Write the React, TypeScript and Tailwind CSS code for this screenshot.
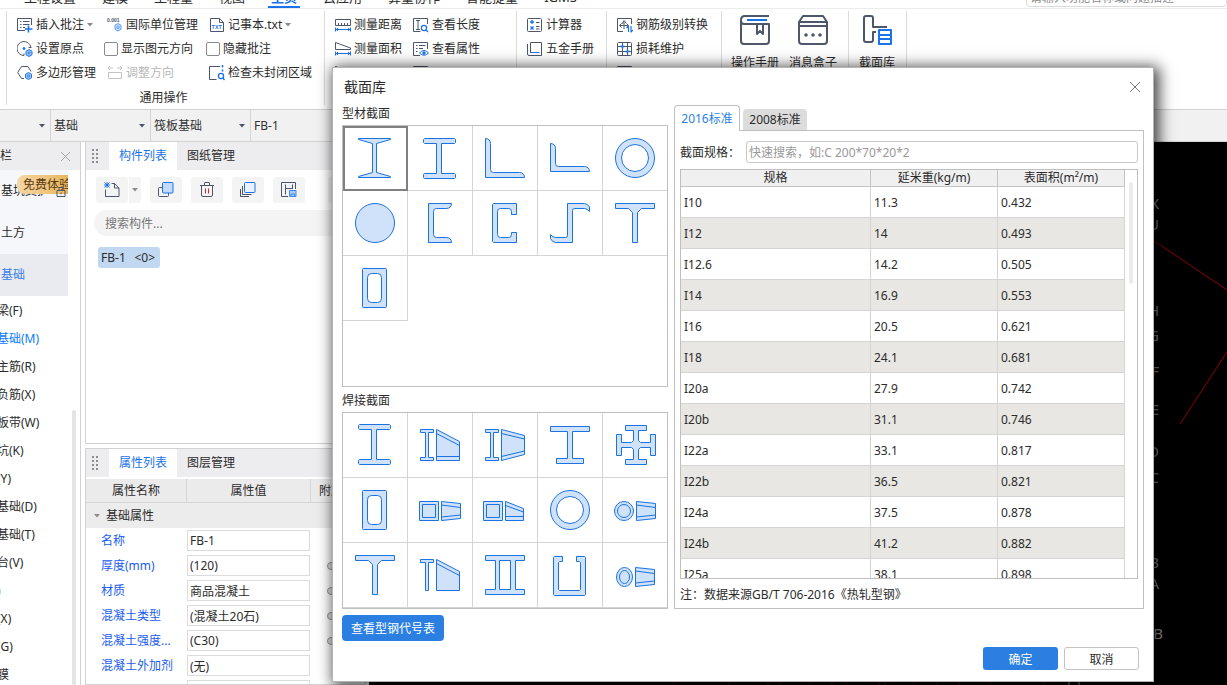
import React from "react";

const INK = "#4d566b";
const BLUE = "#1a73e8";

/* ---------- ribbon icons (16 x 16) ---------- */

function Icon16({ children, className = "" }: { children: React.ReactNode; className?: string }) {
  return (
    <svg viewBox="0 0 16 16" className={`size-4 shrink-0 ${className}`} fill="none" stroke={INK} strokeLinejoin="round" aria-hidden="true">
      {children}
    </svg>
  );
}

const Gear = ({ x, y }: { x: number; y: number }) => (
  <g stroke={BLUE}>
    <path d={`M${x} ${y - 3.5}l3 1.75v3.5l-3 1.75l-3 -1.75v-3.5z`} fill="#9cc6fb" />
    <circle cx={x} cy={y} r="1" fill="#fff" />
  </g>
);

const NoteAddIcon = () => (
  <Icon16>
    <path d="M14.5 8V1.5H.5V13.5H8" />
    <path d="M3 4.5H4.5M6 4.5H12.5M3 7.5H4.5M6 7.5H12.5M3 10.5H4.5M6 10.5H8" />
    <path d="M11.5 8.5V15.5M8 12H15.5" stroke={BLUE} strokeWidth="1.6" />
  </Icon16>
);
const OriginIcon = () => (
  <Icon16>
    <path d="M13.8 6A7 7 0 1 0 7 14.5M11.5 6.5H14.5M7 14.5V12.5" />
    <circle cx="7" cy="7.5" r="1" fill={BLUE} stroke={BLUE} />
    <Gear x={12} y={12} />
  </Icon16>
);
const PolygonIcon = () => (
  <Icon16>
    <path d="M14 6.5L11 1.5H4.5L.7 7.5L4.5 13.5H7" />
    <Gear x={11.5} y={11} />
  </Icon16>
);
const UnitIcon = () => (
  <Icon16>
    <text x="0" y="5" fontSize="5" fontWeight="700" fontFamily="Liberation Sans, sans-serif" fill={INK} stroke="none">0.001</text>
    <g stroke="#5b9ff2">
      <path d="M11 6.5l3 1.75v4l-3 1.75l-3 -1.75v-4z" fill="#cfe3fd" />
      <circle cx="11" cy="10.3" r="1.3" />
    </g>
  </Icon16>
);
const TxtIcon = () => (
  <Icon16>
    <path d="M10.5 1.5H1.5V14.5H14.5V5.5L10.5 1.5V5.5H14.5" />
    <text x="2.6" y="12.4" fontSize="5.4" fontWeight="700" fontFamily="Liberation Sans, sans-serif" fill={BLUE} stroke="none">TXT</text>
  </Icon16>
);
const AdjustIcon = () => (
  <Icon16>
    <g stroke="#c4c4c4">
      <path d="M1.5 7.5H14.5V13.5H1.5zM1 3H6M10 3H15M3 1L1 3L3 5M13 1L15 3L13 5" />
    </g>
  </Icon16>
);
const RegionIcon = () => (
  <Icon16>
    <path d="M11 1.5H.5V14.5H7.5" />
    <path d="M13.5 0V2.5M13.5 4.5V6.5" stroke={BLUE} strokeWidth="1.6" />
    <circle cx="12" cy="11" r="2.6" stroke={BLUE} strokeWidth="1.3" />
    <path d="M13.8 13L15.5 15" stroke={BLUE} strokeWidth="1.3" />
  </Icon16>
);
const RulerIcon = () => (
  <Icon16>
    <path d="M.5 2.5H15.5V8.5H.5zM3.5 6V8.5M6.5 6V8.5M9.5 6V8.5M12.5 6V8.5" />
    <path d="M1 12.5H15M.5 10.5V14.5M15.5 10.5V14.5M3 11L1.2 12.5L3 14M13 11L14.8 12.5L13 14" stroke={BLUE} />
  </Icon16>
);
const AreaIcon = () => (
  <Icon16>
    <path d="M.5 8.5V1.5L15.5 7V8.5z" />
    <path d="M1 12.5H15M.5 10.5V14.5M15.5 10.5V14.5M3 11L1.2 12.5L3 14M13 11L14.8 12.5L13 14" stroke={BLUE} />
  </Icon16>
);
const LengthIcon = () => (
  <Icon16>
    <path d="M14.5 7V1.5H.5V14.5H7.5M3 3.5H7M5 3.5V12.5M3 12.5H7" />
    <circle cx="11" cy="11" r="2.6" stroke={BLUE} strokeWidth="1.3" />
    <path d="M13 13L15 15" stroke={BLUE} strokeWidth="1.3" />
  </Icon16>
);
const PropIcon = () => (
  <Icon16>
    <path d="M14.5 8V1.5H.5V14.5H7M3 4.5H4.5M6 4.5H12.5M3 7.5H4.5M6 7.5H10M3 10.5H4.5" />
    <path d="M6.5 12Q11 7 15.5 12Q11 16.5 6.5 12z" stroke={BLUE} />
    <circle cx="11" cy="12" r="1.2" stroke={BLUE} fill={BLUE} />
  </Icon16>
);
const CalcIcon = () => (
  <Icon16>
    <rect x=".5" y="1.5" width="14" height="13" rx="1" />
    <path d="M3 5H7M5 3V7M3.5 9.5L6.5 12.5M6.5 9.5L3.5 12.5" stroke={BLUE} strokeWidth="1.3" />
    <path d="M9 5.5H12.5M9 9.5H12.5M9 12H12.5" />
  </Icon16>
);
const BookIcon = () => (
  <Icon16>
    <path d="M14.5 10V14.5H2Q.5 14.5 .5 13V3M3.5 1.5H14.5V11.5M3.5 1.5V11.5" />
    <path d="M3 11.5H12.5" stroke={BLUE} />
  </Icon16>
);
const RebarIcon = () => (
  <Icon16>
    <path d="M14.5 7V1.5H.5V14.5H6M2.5 8.5H11.5M4.5 6.5L2.5 8.5L4.5 10.5M7 12V5M5 7L7 3.5L9 6M9.5 6.5L11.5 8.5" />
    <path d="M11.5 15V9L9.5 11M14 9V15L16 13" stroke={BLUE} strokeWidth="1.2" />
  </Icon16>
);
const LossIcon = () => (
  <Icon16>
    <rect x=".5" y="1.5" width="14" height="13" rx="1" />
    <path d="M5.5 1.5V14.5M10.5 1.5V14.5M.5 5.5H14.5M.5 10.5H14.5" />
    <path d="M5.5 3.5V7.5M3.5 5.5H7.5M10.5 8.5V12.5M8.5 10.5H12.5" stroke={BLUE} strokeWidth="1.4" />
  </Icon16>
);

const ManualIcon = () => (
  <svg viewBox="0 0 30 30" className="size-[30px]" fill="none" stroke={INK} strokeWidth="2" strokeLinejoin="round" aria-hidden="true">
    <path d="M29 1H5Q1 1 1 5V26Q1 29 4 29H26Q29 29 29 26V9H4Q1 9 1 6" />
    <path d="M7 5H27" stroke={BLUE} />
    <path d="M17 9V19L20 16L23 19V9" />
  </svg>
);
const BoxIcon = () => (
  <svg viewBox="0 0 30 30" className="size-[30px]" fill="none" stroke={INK} strokeWidth="2" strokeLinejoin="round" aria-hidden="true">
    <path d="M1 7L5 1H25L29 7V26Q29 29 26 29H4Q1 29 1 26zM1 7H29M1 11H29" />
    <g fill={INK} stroke="none">
      <circle cx="8" cy="20" r="1.8" />
      <circle cx="15" cy="20" r="1.8" />
      <circle cx="22" cy="20" r="1.8" />
    </g>
  </svg>
);
const SectionIcon = () => (
  <svg viewBox="0 0 30 30" className="size-[30px]" fill="none" stroke={INK} strokeWidth="2" strokeLinejoin="round" aria-hidden="true">
    <path d="M25 12H11V3Q11 1 9 1H4Q2 1 2 3V25Q2 27 4 27H9Q11 27 11 25V17H14" />
    <path d="M17 15H29V29H17zM17 20H29M17 24H29" stroke={BLUE} />
  </svg>
);

const Caret = ({ className = "" }: { className?: string }) => (
  <svg viewBox="0 0 6 4" className={`h-1 w-1.5 shrink-0 ${className}`} fill="currentColor" aria-hidden="true">
    <path d="M0 0H6L3 3.5z" />
  </svg>
);

const Cross = ({ className = "" }: { className?: string }) => (
  <svg viewBox="0 0 12 12" className={className} fill="none" stroke="currentColor" aria-hidden="true">
    <path d="M1 1L11 11M11 1L1 11" />
  </svg>
);

/* ---------- ribbon ---------- */

function Tool({ icon, label, caret, disabled }: { icon: React.ReactNode; label: string; caret?: boolean; disabled?: boolean }) {
  return (
    <button type="button" disabled={disabled} className="flex h-6 items-center gap-[3px] whitespace-nowrap disabled:text-[#b8b8b8]">
      {icon}
      {label}
      {caret && <Caret className="text-[#888]" />}
    </button>
  );
}

function Check({ label }: { label: string }) {
  return (
    <label className="-ml-[3px] flex h-6 items-center gap-[3px] whitespace-nowrap">
      <input type="checkbox" className="size-3.5 appearance-none rounded-xs border border-[#8a8a8a] bg-white" />
      {label}
    </label>
  );
}

function BigTool({ icon, label }: { icon: React.ReactNode; label: string }) {
  return (
    <button type="button" className="flex flex-col items-center gap-2.5 whitespace-nowrap">
      {icon}
      <span className="leading-4">{label}</span>
    </button>
  );
}

const tabs = ["工程设置", "建模", "工程量", "视图", "主页", "云应用", "算量协作", "智能提量", "IGMS"];

function Ribbon() {
  const group = "mt-0.5 mb-1 flex border-l border-[#dcdcdc] pt-0.5";
  return (
    <header className="shrink-0 border-b border-[#d2d2d2] bg-white">
      <div className="flex h-[9px] items-end justify-between overflow-hidden border-b border-[#ececec]">
        <nav className="flex gap-5 pl-[21px] text-[13px]">
          {tabs.map((t) => (
            <a
              key={t}
              href="#"
              className={
                t === "主页"
                  ? "border-b-2 border-[#1a73e8] px-[3px] leading-[18px] font-bold whitespace-nowrap text-[#1a73e8]"
                  : "border-b-2 border-transparent px-[3px] leading-[18px] whitespace-nowrap"
              }
            >
              {t}
            </a>
          ))}
        </nav>
        <input
          aria-label="搜索功能"
          placeholder="请输入功能名称或问题描述"
          className="mb-px h-5 w-[201px] rounded-sm border border-[#dcdcdc] px-[3px] placeholder:text-[#8a8a8a]"
        />
      </div>
      <div className="flex h-[100px] pl-1.5">
        <section className={`${group} w-[318px] flex-col`}>
          <div className="grid grid-cols-[90px_102px_auto] pl-2.5">
            <Tool icon={<NoteAddIcon />} label="插入批注" caret />
            <Tool icon={<UnitIcon />} label="国际单位管理" />
            <Tool icon={<TxtIcon />} label="记事本.txt" caret />
            <Tool icon={<OriginIcon />} label="设置原点" />
            <Check label="显示图元方向" />
            <Check label="隐藏批注" />
            <Tool icon={<PolygonIcon />} label="多边形管理" />
            <Tool icon={<AdjustIcon />} label="调整方向" disabled />
            <Tool icon={<RegionIcon />} label="检查未封闭区域" />
          </div>
          <h2 className="pr-1 text-center leading-[26px]">通用操作</h2>
        </section>
        <section className={`${group} w-48`}>
          <div className="grid grid-cols-[78px_auto] content-start pl-2.5">
            <Tool icon={<RulerIcon />} label="测量距离" />
            <Tool icon={<LengthIcon />} label="查看长度" />
            <Tool icon={<AreaIcon />} label="测量面积" />
            <Tool icon={<PropIcon />} label="查看属性" />
            <span className="flex h-6 items-center"><AreaIcon /></span>
            <span className="flex h-6 items-center"><PropIcon /></span>
          </div>
        </section>
        <section className={`${group} w-[90px]`}>
          <div className="pl-2.5">
            <Tool icon={<CalcIcon />} label="计算器" />
            <Tool icon={<BookIcon />} label="五金手册" />
          </div>
        </section>
        <section className={`${group} w-[115px]`}>
          <div className="pl-2.5">
            <Tool icon={<RebarIcon />} label="钢筋级别转换" />
            <Tool icon={<LossIcon />} label="损耗维护" />
            <span className="flex h-6 items-center"><RebarIcon /></span>
          </div>
        </section>
        <section className={`${group} w-[127px] items-start`}>
          <div className="flex gap-2.5 pt-0.5 pl-[9px]">
            <BigTool icon={<ManualIcon />} label="操作手册" />
            <BigTool icon={<BoxIcon />} label="消息盒子" />
          </div>
        </section>
        <section className={`${group} w-[59px] items-start border-r`}>
          <div className="pt-0.5 pl-2.5">
            <BigTool icon={<SectionIcon />} label="截面库" />
          </div>
        </section>
      </div>
    </header>
  );
}

function SelectorBar() {
  const cell = "flex items-center justify-between border-r border-[#d5d5d5] pr-[5px] pl-[3px]";
  return (
    <div className="flex h-8 shrink-0 border-b border-[#d2d2d2] bg-[#f1f1f1] text-[#333]">
      <div className={`${cell} w-[51px]`}>
        <span />
        <Caret className="text-[#4d566b]" />
      </div>
      <button type="button" className={`${cell} w-[100px]`}>
        基础
        <Caret className="text-[#4d566b]" />
      </button>
      <button type="button" className={`${cell} w-[100px]`}>
        筏板基础
        <Caret className="text-[#4d566b]" />
      </button>
      <div className="flex items-center pl-[3px]">FB-1</div>
    </div>
  );
}

/* ---------- left navigation ---------- */

const navItems = ["梁(F)", "基础(M)", "主筋(R)", "负筋(X)", "板带(W)", "坑(K)", "(Y)", "基础(D)", "基础(T)", "台(V)", ")", "(X)", "(G)", "膜"];

function SideNav() {
  return (
    <aside className="relative w-[81px] shrink-0 overflow-hidden border-r border-[#d2d2d2] bg-white">
      <div className="flex h-7 items-center justify-between bg-[#ededf0] pr-[9px]">
        <span>栏</span>
        <button type="button" aria-label="关闭">
          <Cross className="size-[11px] text-[#9a9a9a]" />
        </button>
      </div>
      <div className="mr-3 bg-[#f5f7fa]">
        <div className="relative flex h-[42px] items-center overflow-hidden pl-px">
          基坑支护
          <span className="absolute top-[5px] right-0 h-[19px] w-[51px] overflow-hidden rounded-l-lg bg-linear-to-r from-[#f4d7a5] to-[#e8b75b] pl-1.5 leading-[19px] whitespace-nowrap text-[#5b3a12]">
            免费体验
          </span>
          <svg viewBox="0 0 10 11" className="absolute top-[16px] right-0.5 h-[11px] w-2.5" fill="none" stroke="#4d566b" aria-hidden="true">
            <path d="M1 4.5H9V10.5H1zM3 4.5V1.5H7V4.5M5 6.5V8.5" />
          </svg>
        </div>
        <div className="flex h-[42px] items-center pl-px">土方</div>
        <div className="flex h-[42px] items-center bg-[#e9ebf0] pl-px text-[#3b7de8]">基础</div>
      </div>
      <ul className="-ml-[3px] pt-px">
        {navItems.map((t, i) => (
          <li key={i} className={i === 1 ? "h-7 leading-7 text-[#0a7cff]" : "h-7 leading-7"}>
            {t}
          </li>
        ))}
      </ul>
      <div className="absolute top-[268px] right-1 bottom-0 w-1 rounded-full bg-[#e4e4e4]" />
    </aside>
  );
}

/* ---------- component and property panels ---------- */

function PanelTabs({ active, other }: { active: string; other: string }) {
  return (
    <div className="flex h-7 items-center bg-[#ededf0] pl-1.5">
      <svg viewBox="0 0 6 14" className="mr-[11px] h-3.5 w-1.5" fill="#8d8d8d" aria-hidden="true">
        {[0, 4, 8, 12].map((y) => (
          <path key={y} d={`M0 ${y}h2v2h-2zM4 ${y}h2v2h-2z`} />
        ))}
      </svg>
      <button type="button" className="h-full bg-white px-2.5 text-[#1a73e8]">
        {active}
      </button>
      <button type="button" className="h-full px-2.5">
        {other}
      </button>
    </div>
  );
}

function PanelButton({ label, children }: { label: string; children: React.ReactNode }) {
  return (
    <button type="button" aria-label={label} className="flex h-[26px] w-8 shrink-0 items-center justify-center rounded-[3px] bg-[#f4f4f5]">
      {children}
    </button>
  );
}

function ComponentPanel() {
  return (
    <section className="h-[302px] overflow-hidden border border-t-0 border-[#d2d2d2] bg-white">
      <PanelTabs active="构件列表" other="图纸管理" />
      <div className="flex gap-[9px] pt-[7px] pl-2.5">
        <div className="flex gap-px">
          <PanelButton label="新建">
            <Icon16>
              <path d="M7.5 1.5H10.5L15 6V14.5H1.5V7.5M10.5 1.5V6H15" />
              <path d="M.5 .5L5.5 5.5M5.5 .5L.5 5.5M3 0V6M0 3H6" stroke={BLUE} />
            </Icon16>
          </PanelButton>
          <button type="button" aria-label="更多" className="flex w-3 items-center justify-center rounded-r-[3px] bg-[#f4f4f5]">
            <Caret className="text-[#8d8d8d]" />
          </button>
        </div>
        <PanelButton label="复制">
          <Icon16>
            <path d="M5 5.5H1.5Q.5 5.5 .5 6.5V13.5Q.5 14.5 1.5 14.5H9.5Q10.5 14.5 10.5 13.5V11" />
            <rect x="4.5" y=".5" width="10.5" height="10.5" rx="1" fill="#c3dafa" stroke={BLUE} />
          </Icon16>
        </PanelButton>
        <PanelButton label="删除">
          <Icon16>
            <path d="M1 3.5H15M5.5 3.5V1Q5.5 .5 6 .5H10Q10.5 .5 10.5 1V3.5M2.5 3.5V13Q2.5 14.5 4 14.5H12Q13.5 14.5 13.5 13V3.5" />
            <path d="M6.5 6.5V11.5M9.5 6.5V11.5" stroke="#e02020" />
          </Icon16>
        </PanelButton>
        <PanelButton label="层间复制">
          <Icon16>
            <path d="M2.5 4V12.5H11.5M.5 7V14.5H9" />
            <rect x="4.5" y=".5" width="10.5" height="10" rx="1" fill="#eaf2fe" stroke={BLUE} />
          </Icon16>
        </PanelButton>
        <PanelButton label="存档">
          <Icon16>
            <path d="M14.5 7V.5H.5V14.5H7M4.5 2.5V12.5M11.5 2.5V7M4.5 6.5H11.5" />
            <path d="M8.5 8.5H15V14.5H8.5zM10 14.5V12H13.5V14.5" stroke="#3f8bec" fill="#a9ccf8" />
          </Icon16>
        </PanelButton>
        <span className="ml-3.5">
          <PanelButton label="其他">
            <Caret className="text-[#8d8d8d]" />
          </PanelButton>
        </span>
      </div>
      <div className="pt-[7px] pl-2">
        <input
          aria-label="搜索构件"
          placeholder="搜索构件..."
          className="block h-[26px] w-full rounded-l-full bg-[#f4f4f4] px-[11px] placeholder:text-[#777]"
        />
      </div>
      <button type="button" className="mt-[11px] ml-3 h-[21px] w-[62px] rounded-[3px] bg-[#c0d8f1] px-[3px]">
        <span className="flex justify-between pr-0.5 whitespace-pre">
          <span>FB-1 </span>
          <span>&lt;0&gt;</span>
        </span>
      </button>
    </section>
  );
}

const props: { label: string; value: string; mark?: boolean }[] = [
  { label: "名称", value: "FB-1" },
  { label: "厚度(mm)", value: "(120)", mark: true },
  { label: "材质", value: "商品混凝土", mark: true },
  { label: "混凝土类型", value: "(混凝土20石)", mark: true },
  { label: "混凝土强度...", value: "(C30)", mark: true },
  { label: "混凝土外加剂", value: "(无)" },
  { label: "", value: "" },
];

function PropertyPanel() {
  return (
    <section className="mt-1 flex-1 overflow-hidden border border-[#d2d2d2] bg-white">
      <PanelTabs active="属性列表" other="图层管理" />
      <table className="mt-0.5 w-full table-fixed border-separate border-spacing-0">
        <colgroup>
          <col className="w-[101px]" />
          <col className="w-[124px]" />
          <col />
        </colgroup>
        <thead>
          <tr className="h-6 bg-[#ebebeb]">
            <th className="border-r border-b border-[#d5d5d5] p-0 font-normal">属性名称</th>
            <th className="border-r border-b border-[#d5d5d5] p-0 font-normal">属性值</th>
            <th className="border-b border-[#d5d5d5] p-0 pl-2 text-left font-normal">附加</th>
          </tr>
        </thead>
        <tbody>
          <tr className="h-[25px] bg-[#ececec]">
            <th colSpan={3} scope="rowgroup" className="p-0 text-left font-normal">
              <span className="flex items-center gap-1.5 pl-2">
                <Caret className="text-[#8d8d8d]" />
                基础属性
              </span>
            </th>
          </tr>
          {props.map((p, i) => (
            <tr key={i} className="h-[25px]">
              <th scope="row" className="truncate p-0 pl-[15px] text-left font-normal text-[#1a5cf0]">
                <label htmlFor={`prop-${i}`}>{p.label}</label>
              </th>
              <td className="p-0">
                <input id={`prop-${i}`} defaultValue={p.value} className="block h-[21px] w-[123px] border border-[#dcdcdc] bg-white px-0.5" />
              </td>
              <td className="p-0 pl-4">{p.mark && <span className="block size-2 rounded-full border border-[#999] bg-[#ddd]" />}</td>
            </tr>
          ))}
        </tbody>
      </table>
    </section>
  );
}

/* ---------- drawing canvas ---------- */

const axisLabels: [string, number][] = [
  ["X", 67],
  ["U", 88],
  ["H", 174],
  ["G", 199],
  ["F", 235],
  ["E", 273],
  ["D", 315],
  ["C", 341],
  ["B", 426],
  ["A", 447],
];

function Canvas() {
  return (
    <main className="ml-[3px] flex-1 overflow-hidden bg-black">
      <svg className="size-full" aria-hidden="true">
        <path d="M784 98L858 148M811 282L858 210" stroke="#8f0000" fill="none" />
        <path
          d="M305 539V543M360 539V543M399 539V543M411 539V543M441 539V543M463 539V543M477 539V543M510 539V543M516 539V543M545 539V543M568 539V543M590 539V543M621 539V543M675 539V543"
          stroke="#7a0000"
        />
        <path d="M700 540V543M710 540V543" stroke="#999" />
        {axisLabels.map(([t, y]) => (
          <text key={t} x="790" y={y} textAnchor="end" fontSize="15" fill="#8a8f8a" fontFamily="Noto Sans, sans-serif">
            {t}
          </text>
        ))}
        <text x="794" y="497" textAnchor="end" fontSize="15" fill="#9a9a9a" fontFamily="Noto Sans, sans-serif">
          B
        </text>
      </svg>
    </main>
  );
}

/* ---------- section shapes (64 x 64) ---------- */

const H_BEAM =
  "M16.5 12.5H46.5L47.5 13.5V16.5L46.5 17.5H33.5V47.5H46.5L47.5 48.5V51.5L46.5 52.5H16.5L15.5 51.5V48.5L16.5 47.5H28.5V17.5H16.5L15.5 16.5V13.5Z";
const T_BEAM = "M12.5 12.5H51.5V17.5H38.5L34.5 21.5V51.5H29.5V21.5L25.5 17.5H12.5Z";
const SMALL_I = "M12.5 16.5H25.5V19.5H20.5V44.5H25.5V47.5H12.5V44.5H17.5V19.5H12.5Z";

const Tube = () => (
  <>
    <rect x="19.5" y="12.5" width="24" height="39" rx="1" />
    <rect x="24.5" y="17.5" width="14" height="29" rx="4" fill="#fff" />
  </>
);
const Ring = () => (
  <>
    <circle cx="32" cy="32" r="19.5" />
    <circle cx="32" cy="32" r="13.5" fill="#fff" />
  </>
);
const Taper = () => <path d="M33.5 23.5L52.5 25.5V40.5L33.5 42.5ZM33.5 27L52.5 29.5M33.5 39L52.5 37" />;

const rolled: [string, React.ReactNode][] = [
  ["工字钢", <path d="M15.5 12.5H47.5V13.5L33.5 17.5V46.5L47.5 50.5V51.5H15.5V50.5L29.5 46.5V17.5L15.5 13.5Z" />],
  ["H型钢", <path d={H_BEAM} />],
  ["等边角钢", <path d="M12.5 12.5C15.5 12.5 17.5 14.5 17.5 17.5V43.5Q17.5 46.5 20.5 46.5H46.5C49.5 46.5 51.5 48.5 51.5 51.5H12.5Z" />],
  ["不等边角钢", <path d="M12.5 17.5C15.5 17.5 17.5 19.5 17.5 22.5V37.5Q17.5 40.5 20.5 40.5H46.5C49.5 40.5 51.5 42.5 51.5 45.5H12.5Z" />],
  ["圆管", <Ring />],
  ["圆钢", <circle cx="32" cy="32" r="19.5" />],
  ["槽钢", <path d="M20.5 12.5H43.5C43.5 15.5 41.5 17.5 38.5 17.5H28.5Q25.5 17.5 25.5 20.5V43.5Q25.5 46.5 28.5 46.5H38.5C41.5 46.5 43.5 48.5 43.5 51.5H20.5Z" />],
  [
    "C型钢",
    <path d="M20.5 12.5H43.5V23.5H38.5V20.5Q38.5 17.5 35.5 17.5H27.5Q24.5 17.5 24.5 20.5V43.5Q24.5 46.5 27.5 46.5H35.5Q38.5 46.5 38.5 43.5V41.5H43.5V51.5H20.5L19.5 50.5V13.5Z" />,
  ],
  ["Z型钢", <path d="M29.5 12.5H46.5Q50 13 51.5 16V20.5Q49 17.5 46.5 17.5H36.5Q34.5 17.5 34.5 19.5V51.5H17.5Q14 51 12.5 47.5V43.5Q15 46.5 17.5 46.5H27.5Q29.5 46.5 29.5 44.5Z" />],
  ["T型钢", <path d={T_BEAM} />],
  ["方管", <Tube />],
];

const welded: [string, React.ReactNode][] = [
  ["焊接H型", <path d={H_BEAM} transform="translate(0 -1)" />],
  [
    "单坡变截面H型",
    <>
      <path d={SMALL_I} />
      <path d="M28.5 16.5L51.5 28.5V47.5H28.5ZM28.5 20.5L51.5 32.5M28.5 43.5H51.5" />
    </>,
  ],
  [
    "双坡变截面H型",
    <>
      <path d={SMALL_I} />
      <path d="M28.5 16.5L51.5 22.5V41.5L28.5 47.5ZM28.5 20.5L51.5 26M28.5 43.5L51.5 38" />
    </>,
  ],
  ["不等翼缘H型", <path d="M12.5 13.5H51.5V18.5H34.5V45.5H45.5V50.5H18.5V45.5H29.5V18.5H12.5Z" />],
  [
    "十字型",
    <path d="M22.5 12.5H43.5V17.5H35.5V27.5L37.5 29.5H47.5V21.5H52.5V42.5H47.5V34.5H37.5L35.5 36.5V46.5H43.5V51.5H22.5V46.5H30.5V36.5L28.5 34.5H18.5V42.5H13.5V21.5H18.5V29.5H28.5L30.5 27.5V17.5H22.5Z" />,
  ],
  ["箱型", <Tube />],
  [
    "双坡变截面箱型",
    <>
      <path d="M11.5 23.5H30.5V42.5H11.5ZM14.5 26.5H27.5V39.5H14.5Z" />
      <Taper />
    </>,
  ],
  [
    "单坡变截面箱型",
    <>
      <path d="M10.5 23.5H29.5V42.5H10.5ZM13.5 26.5H26.5V39.5H13.5Z" />
      <path d="M32.5 23.5L50.5 30.5V42.5H32.5ZM32.5 27.5L50.5 34M32.5 38.5H50.5" />
    </>,
  ],
  ["焊接圆管", <Ring />],
  [
    "变截面圆管",
    <>
      <circle cx="21" cy="33" r="9.5" />
      <circle cx="21" cy="33" r="6.5" />
      <Taper />
    </>,
  ],
  ["焊接T型", <path d={T_BEAM} />],
  [
    "变截面T型",
    <>
      <path d="M12.5 16.5H25.5V19.5H20.5V47.5H17.5V19.5H12.5Z" />
      <path d="M28.5 16.5L51.5 28.5V47.5H28.5ZM28.5 20.5L51.5 32.5" />
    </>,
  ],
  ["双腹板", <path fillRule="evenodd" d="M12.5 12.5H51.5V17.5H42.5V46.5H51.5V51.5H12.5V46.5H22.5V17.5H12.5ZM26.5 17.5H37.5V46.5H26.5Z" />],
  [
    "U型",
    <path d="M16.5 13.5H24.5V18.5H21.5L20.5 19.5V46.5L21.5 47.5H41.5L42.5 46.5V19.5L41.5 18.5H38.5V13.5H46.5L47.5 14.5V51.5L46.5 52.5H16.5L15.5 51.5V14.5Z" />,
  ],
  [
    "变截面椭圆管",
    <>
      <ellipse cx="21.5" cy="34" rx="8" ry="9.5" />
      <ellipse cx="21.5" cy="34" rx="5" ry="6.5" />
      <g transform="translate(-1 1)">
        <Taper />
      </g>
    </>,
  ],
];

function ShapeGrid({ items, selected, className = "" }: { items: [string, React.ReactNode][]; selected?: number; className?: string }) {
  return (
    <div className={`grid w-[326px] grid-cols-[repeat(5,65px)] content-start overflow-hidden border border-[#bfbfbf] ${className}`}>
      {items.map(([name, shape], i) => (
        <button
          key={name}
          type="button"
          aria-label={name}
          className={`size-[65px] border-r border-b border-[#d4d4d4] ${i === selected ? "outline-2 -outline-offset-2 outline-[#808080]" : ""}`}
        >
          <svg viewBox="0 0 64 64" className="size-16" fill="#d0e2fa" stroke="#1a73e0" strokeLinejoin="round" aria-hidden="true">
            {shape}
          </svg>
        </button>
      ))}
    </div>
  );
}

/* ---------- dialog ---------- */

const specs = [
  ["I10", "11.3", "0.432"],
  ["I12", "14", "0.493"],
  ["I12.6", "14.2", "0.505"],
  ["I14", "16.9", "0.553"],
  ["I16", "20.5", "0.621"],
  ["I18", "24.1", "0.681"],
  ["I20a", "27.9", "0.742"],
  ["I20b", "31.1", "0.746"],
  ["I22a", "33.1", "0.817"],
  ["I22b", "36.5", "0.821"],
  ["I24a", "37.5", "0.878"],
  ["I24b", "41.2", "0.882"],
  ["I25a", "38.1", "0.898"],
];

function SpecTable() {
  return (
    <div className="relative mt-1.5 h-[410px] overflow-hidden border border-[#bfbfbf] pr-3">
      <table className="w-full table-fixed border-separate border-spacing-0">
        <colgroup>
          <col className="w-[190px]" />
          <col />
          <col />
        </colgroup>
        <thead>
          <tr className="h-[17px] bg-[#f0f0f0]">
            {["规格", "延米重(kg/m)", "表面积(m²/m)"].map((h) => (
              <th key={h} className="border-r border-b border-[#c4c4c4] p-0 leading-4 font-normal">
                {h}
              </th>
            ))}
          </tr>
        </thead>
        <tbody>
          {specs.map((row) => (
            <tr key={row[0]} className="h-[31px] even:bg-[#e8e7e3]">
              {row.map((v, c) => (
                <td key={c} className="border-r border-b border-[#d4d4d4] p-0 pt-0.5 pl-[3px]">
                  {v}
                </td>
              ))}
            </tr>
          ))}
        </tbody>
      </table>
      <div className="absolute top-3 right-1 h-[102px] w-1 rounded-full bg-[#ebebeb]" />
    </div>
  );
}

function SectionDialog() {
  return (
    <div
      role="dialog"
      aria-label="截面库"
      className="absolute top-[67px] right-[73px] left-[332px] border border-[#b4b4b4] bg-white shadow-[3px_2px_14px_2px_rgba(0,0,0,0.75)]"
    >
      <div className="flex h-[37px] items-center justify-between pr-3 pl-[11px]">
        <h1 className="text-sm">截面库</h1>
        <button type="button" aria-label="关闭">
          <Cross className="size-3 text-[#777]" />
        </button>
      </div>
      <div className="flex items-start gap-1.5 pr-[9px] pl-[9px]">
        <div>
          <h2 className="mb-0.5 leading-[18px]">型材截面</h2>
          <ShapeGrid items={rolled} selected={0} className="h-[262px]" />
          <h2 className="mt-[5px] mb-0.5 leading-[18px]">焊接截面</h2>
          <ShapeGrid items={welded} />
          <button type="button" className="mt-1.5 h-[26px] w-[102px] rounded-sm bg-[#2b7fe1] pt-0.5 text-white">
            查看型钢代号表
          </button>
        </div>
        <div className="min-w-0 flex-1">
          <div className="flex h-[25px] items-end gap-[3px]">
            <button type="button" className="relative -mb-px h-[26px] w-[66px] rounded-t-sm border border-b-0 border-[#bfbfbf] bg-white text-[#2b7fe1]">
              2016标准
            </button>
            <button type="button" className="h-[21px] w-16 rounded-t-sm bg-[#dcdcdc]">
              2008标准
            </button>
          </div>
          <div className="border border-[#bfbfbf] px-[5px] pt-2.5">
            <div className="flex h-[22px] items-center">
              <label htmlFor="spec-search" className="w-[66px] shrink-0 pt-0.5">
                截面规格：
              </label>
              <input
                id="spec-search"
                placeholder="快速搜索，如:C 200*70*20*2"
                className="h-full min-w-0 flex-1 rounded-[3px] border border-[#c8c8c8] px-0.5 placeholder:text-[#999]"
              />
            </div>
            <SpecTable />
            <p className="flex h-[29px] items-center pt-0.5">注：数据来源GB/T 706-2016《热轧型钢》</p>
          </div>
        </div>
      </div>
      <div className="mt-1.5 flex justify-end gap-1.5 pr-3.5 pb-[11px]">
        <button type="button" className="h-[23px] w-[75px] rounded-[3px] bg-[#2b7fe1] pt-0.5 text-white">
          确定
        </button>
        <button type="button" className="h-[23px] w-[75px] rounded-[3px] border border-[#c4c4c4] bg-white pt-0.5">
          取消
        </button>
      </div>
    </div>
  );
}

export default function App() {
  return (
    <div
      lang="zh-CN"
      className="relative flex h-screen flex-col overflow-hidden bg-white font-['Noto_Sans','Noto_Sans_CJK_SC',sans-serif] text-xs text-[#2b2b2b]"
    >
      <Ribbon />
      <SelectorBar />
      <div className="flex min-h-0 flex-1">
        <SideNav />
        <div className="ml-1 flex w-[281px] shrink-0 flex-col">
          <ComponentPanel />
          <PropertyPanel />
        </div>
        <Canvas />
      </div>
      <SectionDialog />
    </div>
  );
}
